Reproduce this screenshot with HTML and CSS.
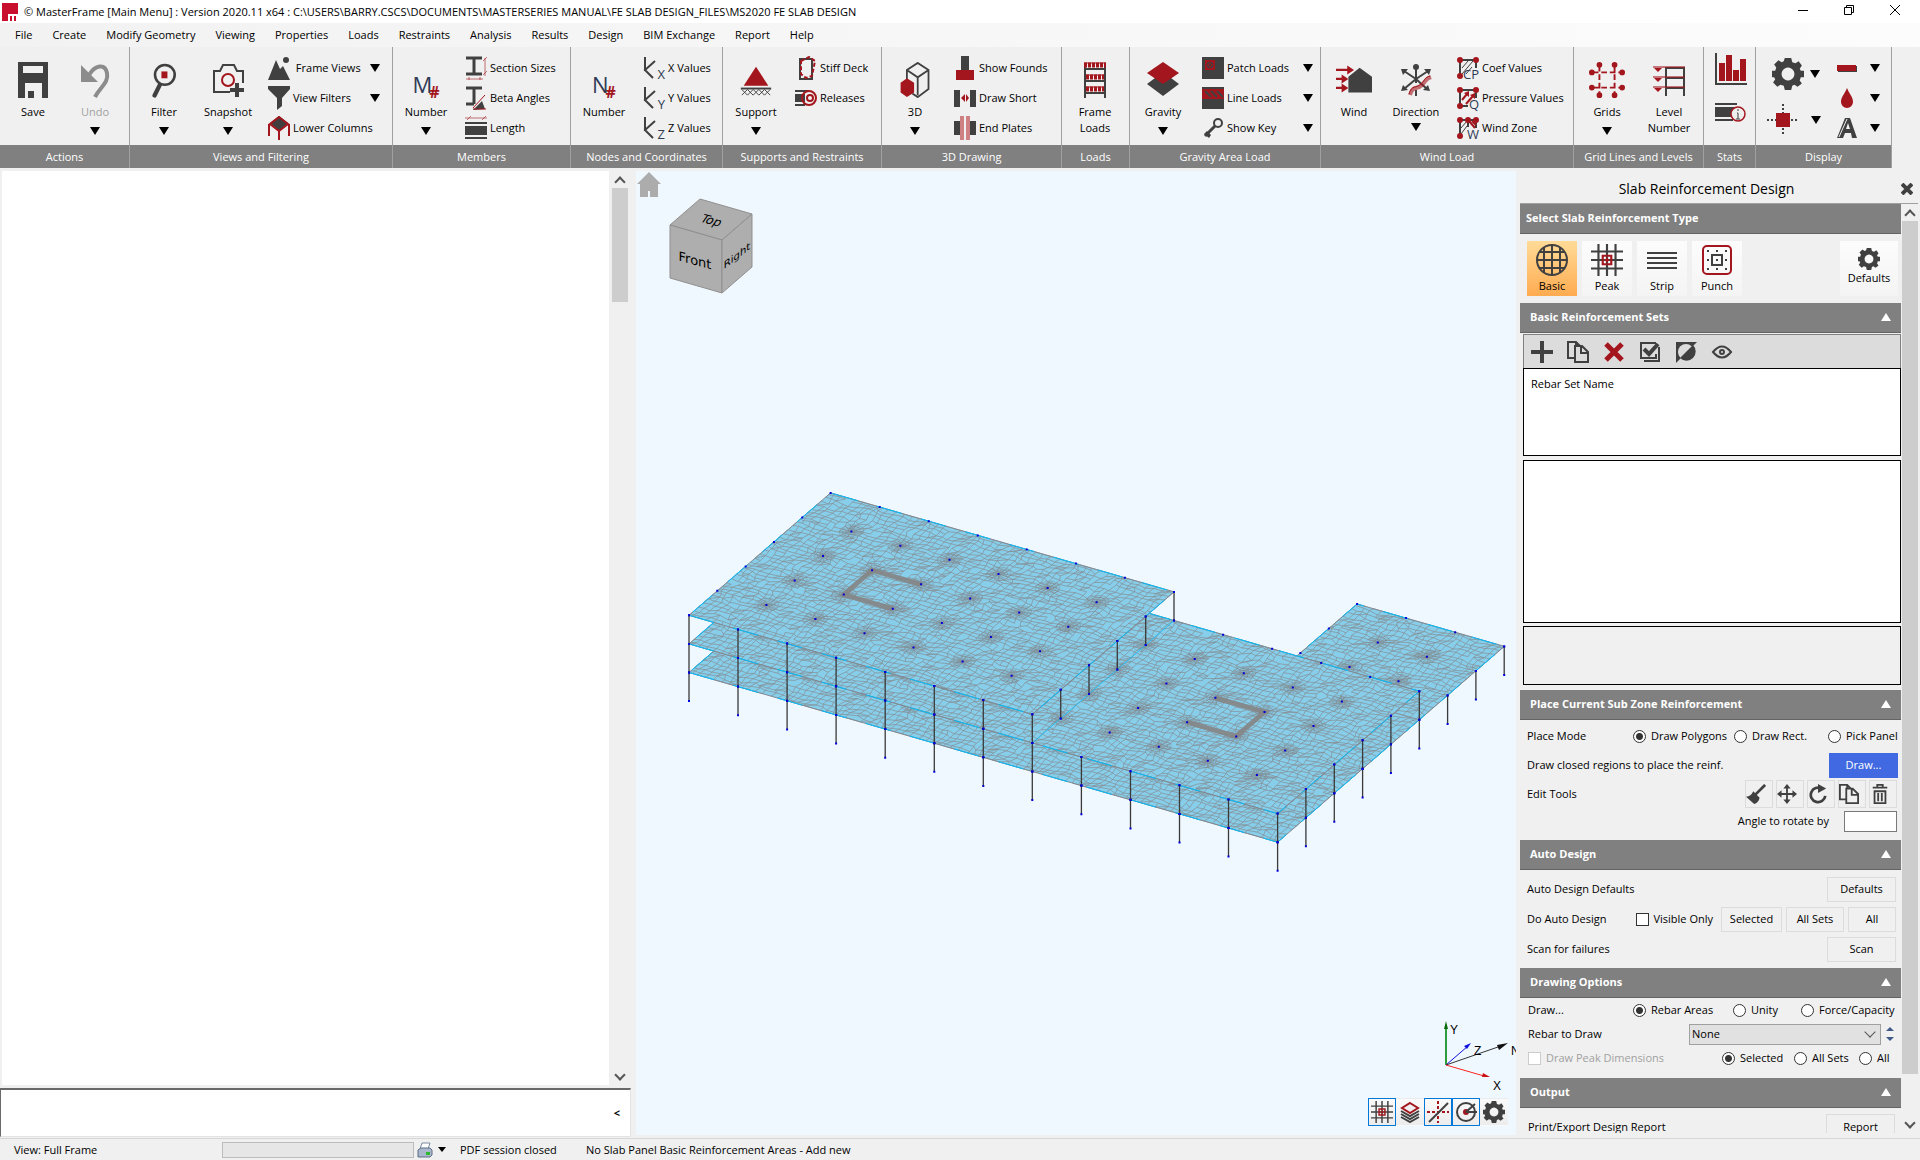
FILE: index.html
```html
<!DOCTYPE html>
<html lang="en">
<head>
<meta charset="utf-8">
<title>MasterFrame - Slab Reinforcement Design</title>
<link rel="stylesheet" href="styles.css">
</head>
<body>
<svg class="defs" aria-hidden="true">
  <symbol id="gear" viewBox="0 0 30 30"><path class="k" fill-rule="evenodd" d="M12 0h6l1 4 3 1 3-2 3 4-2 3 1 2h3v6h-3l-1 3 2 3-4 3-3-2-2 1-1 4h-6l-1-4-3-1-3 2-4-4 2-3-1-2H0v-6h3l1-3-2-3 4-4 3 2 2-1zM15 9a6 6 0 1 0 .01 0z"/></symbol>
  <symbol id="mesh" viewBox="0 0 30 30"><path class="ks" stroke-width="2" d="M7 0v30M15 0v30M23 0v30M0 7h30M0 15h30M0 23h30"/><path class="rs" stroke-width="2" d="M11 11h8v8h-8zM15 13v4M13 15h4"/></symbol>
  <symbol id="copy" viewBox="0 0 22 22"><path class="ks" stroke-width="2" d="M7 17H1V1h8l4 4M9 1v5M8 5h7l6 6v10H8zM14 5v7h7"/></symbol>
  <symbol id="axes" viewBox="0 0 22 22"><path class="ks" stroke-width="2" d="M2 0v14M12 4L2 13l8 8"/></symbol>
  <symbol id="pane" viewBox="0 0 22 22"><path class="ks" stroke-width="2" d="M3 3h16v8M3 3v16"/><path class="ks" d="M5 11l6-7M5 17l11-13M9 17l6-7"/><path class="r" d="M0 3a3 3 0 1 1 6 0 3 3 0 0 1-6 0M16 3a3 3 0 1 1 6 0 3 3 0 0 1-6 0M0 19a3 3 0 1 1 6 0 3 3 0 0 1-6 0"/></symbol>
  <symbol id="pane-flow" viewBox="0 0 22 22"><path class="ks" stroke-width="2" d="M3 3h16v8M3 3v16h8"/><path class="rs" stroke-width="2" d="M5 13l5-6M9 17l7-8"/><path class="r" d="M12 4v6L7 6zM18 6v6l-5-4zM0 3a3 3 0 1 1 6 0 3 3 0 0 1-6 0M16 3a3 3 0 1 1 6 0 3 3 0 0 1-6 0M0 19a3 3 0 1 1 6 0 3 3 0 0 1-6 0"/></symbol>
  <symbol id="pane-zone" viewBox="0 0 22 22"><path class="ks" stroke-width="2" d="M3 3h16v8M3 3v16M11 3v7"/><path class="ks" d="M4 11l6-7M4 17l6-8"/><path class="rs" stroke-width="2" d="M12 4l6 7M15 4l4 4"/><path class="r" d="M0 3a3 3 0 1 1 6 0 3 3 0 0 1-6 0M8 3a3 3 0 1 1 6 0 3 3 0 0 1-6 0M16 3a3 3 0 1 1 6 0 3 3 0 0 1-6 0M0 19a3 3 0 1 1 6 0 3 3 0 0 1-6 0"/></symbol>
</svg>

<header class="titlebar">
  <svg class="logo" viewBox="0 0 16 18"><path fill="#c8102e" d="M0 0h16v18H0z"/><path fill="none" stroke="#fff" stroke-width="2" d="M7 18v-6h8v6M11 12v6"/></svg>
  <h1>© MasterFrame [Main Menu] : Version 2020.11 x64 : C:\USERS\BARRY.CSCS\DOCUMENTS\MASTERSERIES MANUAL\FE SLAB DESIGN_FILES\MS2020 FE SLAB DESIGN</h1>
  <div class="window-buttons">
    <button aria-label="Minimise"><svg viewBox="0 0 12 12"><path d="M1 6.500h10"/></svg></button>
    <button aria-label="Restore"><svg viewBox="0 0 12 12"><path d="M1.500 3.500h7v7h-7zM3.500 3V1.500h7v7H9"/></svg></button>
    <button aria-label="Close"><svg viewBox="0 0 12 12"><path d="M1 1l10 10M11 1L1 11"/></svg></button>
  </div>
</header>

<nav class="menu">
  <a href="#">File</a><a href="#">Create</a><a href="#">Modify Geometry</a><a href="#">Viewing</a><a href="#">Properties</a><a href="#">Loads</a><a href="#">Restraints</a><a href="#">Analysis</a><a href="#">Results</a><a href="#">Design</a><a href="#">BIM Exchange</a><a href="#">Report</a><a href="#">Help</a>
</nav>

<div class="ribbon">
  <section class="group g-actions"><div class="tools">
    <button class="big"><svg viewBox="0 0 30 36"><path class="k" d="M0 0h30v36h-6V21H7v15H0zM5 4v7h20V4z" fill-rule="evenodd"/><path class="k" d="M10 29h6v7h-6z"/></svg><span>Save</span></button>
    <button class="big" disabled><svg viewBox="0 0 30 36"><path fill="#8c8c8c" d="M1 3v17h17l-6-6z"/><path fill="none" stroke="#8c8c8c" stroke-width="4" d="M9 13C15 3 25 1 27 11s-7 14-12 24"/></svg><span>Undo</span><i class="arrow"></i></button>
  </div><h2>Actions</h2></section>

  <section class="group g-views"><div class="tools">
    <button class="big"><svg viewBox="0 0 30 42"><circle cx="16" cy="15" r="11.500" fill="none" stroke="#404040" stroke-width="3"/><path class="r" d="M12 11h7v8h-7z"/><path class="ks" stroke-width="5" stroke-linecap="round" d="M10 27L4 39"/></svg><span>Filter</span><i class="arrow"></i></button>
    <button class="big"><svg viewBox="-2 0 36 34"><path class="ks" stroke-width="2" d="M18 29H2V8h6l3-6h11l3 6h6v12"/><circle class="rs" cx="16" cy="17" r="6" stroke-width="2"/><path class="k" d="M23 20h4v5h5v4h-5v5h-4v-5h-5v-4h5z"/></svg><span>Snapshot</span><i class="arrow"></i></button>
    <div class="list">
      <button><svg viewBox="0 0 22 24"><path class="k" d="M0 24L8 4l4 9 3-3 7 14z"/><circle class="k" cx="18" cy="4" r="3"/></svg>&nbsp;Frame Views<i class="arrow"></i></button>
      <button><svg viewBox="0 0 22 24"><path class="k" d="M0 0h22v3l-8 9v8l-5 4V12L0 3z"/></svg>View Filters<i class="arrow"></i></button>
      <button><svg viewBox="0 0 22 24"><path class="k" d="M11 0l9 7-9 8-9-8z"/><path class="rs" stroke-width="2" d="M11 1l9 7-9 7-9-7zM1 8v12M21 8v12M11 14v11"/></svg>Lower Columns</button>
    </div>
  </div><h2>Views and Filtering</h2></section>

  <section class="group g-members"><div class="tools">
    <button class="big"><span class="glyph"><b>M</b><em>#</em></span><span>Number</span><i class="arrow"></i></button>
    <div class="list">
      <button><svg viewBox="0 0 22 24"><path class="ks" stroke-width="3" d="M1 2h16M1 18h16M9 2v16"/><path class="rs" stroke-opacity=".6" d="M1 23h17M4 21v3M15 21v3M20 2v18M18 5l4-4M18 19l4-4"/></svg>Section Sizes</button>
      <button><svg viewBox="0 0 22 24"><path class="ks" stroke-width="3" d="M1 2h16M1 18h8M9 2v16"/><path class="k" d="M8 24l9-9 3 8z"/><path class="rs" d="M8 22L20 9M8 23h13"/></svg>Beta Angles</button>
      <button><svg viewBox="0 0 22 24"><path class="k" d="M0 6h22v2H0zM0 10h22v9H0zM0 21h22v2H0z"/><path class="rs" stroke-opacity=".6" d="M0 2h22M2 4l4-4M17 4l4-4"/></svg>Length</button>
    </div>
  </div><h2>Members</h2></section>

  <section class="group g-nodes"><div class="tools">
    <button class="big"><span class="glyph"><b>N</b><em>#</em></span><span>Number</span></button>
    <div class="list">
      <button><span class="axis"><svg><use href="#axes"/></svg><b>X</b></span>X Values</button>
      <button><span class="axis"><svg><use href="#axes"/></svg><b>Y</b></span>Y Values</button>
      <button><span class="axis"><svg><use href="#axes"/></svg><b>Z</b></span>Z Values</button>
    </div>
  </div><h2>Nodes and Coordinates</h2></section>

  <section class="group g-supports"><div class="tools">
    <button class="big"><svg viewBox="0 -3 32 38"><path class="r" d="M16 2l13 20H3z"/><path class="ks" stroke-width="2" d="M0 25h32"/><path class="ks" d="M1 32l6-6 6 6 6-6 6 6 6-6M1 26l6 6 6-6 6 6 6-6 6 6"/></svg><span>Support</span><i class="arrow"></i></button>
    <div class="list top">
      <button><svg viewBox="0 0 22 24"><path class="ks" stroke-width="2" d="M5 3h12v20H5z"/><path class="rs" stroke-width="2" stroke-dasharray="4 2" d="M6 5l8-4 6 4-3 15-6 2-5-4z"/></svg>Stiff Deck</button>
      <button><svg viewBox="0 0 22 24"><path class="ks" stroke-width="2" d="M0 5h14M0 19h10"/><path class="k" d="M0 8h10v8H0z"/><circle class="rs" cx="14" cy="12" r="7" stroke-width="2"/><circle class="rs" cx="15" cy="12" r="3" stroke-width="2"/></svg>Releases</button>
    </div>
  </div><h2>Supports and Restraints</h2></section>

  <section class="group g-3d"><div class="tools">
    <button class="big"><svg viewBox="0 0 32 40"><path class="ks" stroke-width="2" d="M7 22V9l12-8 12 8v21l-12 9-6-4M7 9l12 8 12-8M19 17v20"/><path class="r" d="M7 18l8 5v11l-8 5-7-5V23z"/></svg><span>3D</span><i class="arrow"></i></button>
    <div class="list">
      <button><svg viewBox="0 0 22 24"><path class="k" d="M7 0h8v15H7z"/><path class="r" d="M2 14h18v10H2z"/></svg>Show Founds</button>
      <button><svg viewBox="0 0 22 24"><path class="k" d="M0 4h6v17H0zM16 4h6v17h-6z"/><path class="r" d="M7 12l4-4v8zM15 12l-3-4v8z"/></svg>Draw Short</button>
      <button><svg viewBox="0 0 22 24"><path class="k" d="M0 5h7v14H0zM15 5h7v14h-7z"/><path fill="#cf8083" d="M6 0h4v24H6zM12 0h4v24h-4z"/></svg>End Plates</button>
    </div>
  </div><h2>3D Drawing</h2></section>

  <section class="group g-loads"><div class="tools">
    <button class="big"><svg viewBox="0 0 22 36"><path class="ks" stroke-width="2" d="M1 2v34M21 2v34M1 7h20M1 19h20M1 31h20"/><path class="rs" stroke-width="5" stroke-dasharray="3 1" d="M0 3h22M2 15h18M2 27h18"/><path class="rs" d="M0 1h22M2 13h18M2 25h18"/></svg><span>Frame Loads</span></button>
  </div><h2>Loads</h2></section>

  <section class="group g-gravity"><div class="tools">
    <button class="big"><svg viewBox="0 0 32 36"><path class="k" d="M16 10l16 12-16 12L0 22z"/><path class="r" d="M16 0l16 11-16 11L0 11z"/></svg><span>Gravity</span><i class="arrow"></i></button>
    <div class="list">
      <button><svg viewBox="0 0 22 22"><path class="k" d="M0 0h22v22H0z"/><path class="r" d="M3 3h10v10H3z"/><circle cx="8" cy="8" r="3" fill="none" stroke="#404040"/><path stroke="#404040" d="M6 6l4 4M10 6l-4 4"/></svg>Patch Loads<i class="arrow"></i></button>
      <button><svg viewBox="0 0 22 22"><path class="k" d="M0 0h22v22H0z"/><path class="r" d="M0 2h22v10H0z"/><path stroke="#404040" stroke-width="2" d="M3 4l6 6M9 4l6 6M15 4l6 6"/></svg>Line Loads<i class="arrow"></i></button>
      <button><svg viewBox="0 0 22 22"><circle cx="16" cy="6" r="4" class="ks" stroke-width="2"/><path class="ks" stroke-width="3" d="M13 9L3 19"/><path class="k" d="M2 17l3-3 4 4-2 3z"/></svg>Show Key<i class="arrow"></i></button>
    </div>
  </div><h2>Gravity Area Load</h2></section>

  <section class="group g-wind"><div class="tools">
    <button class="big"><svg viewBox="0 0 32 28"><path class="k" d="M11 25V11L21 3l11 8v14z"/><path class="rs" stroke-width="2" d="M0 5h12M0 13h6M0 21h6"/><path class="r" d="M10 1l6 4-6 4zM5 9l6 4-6 4zM5 17l6 4-6 4z"/></svg><span>Wind</span></button>
    <button class="big tight"><svg viewBox="-2 -2 34 36"><path class="ks" stroke-width="2" d="M15 3v16M15 26v6M15 15L3 7M15 15l12-8M15 15L3 25M15 15l11 10"/><circle class="k" cx="15" cy="3" r="3"/><path class="k" d="M0 5h7l-5 6zM30 5h-7l5 6zM0 27l2-6 5 5zM29 27l-2-6-5 5z"/><path class="rs" stroke-width="4" stroke-opacity=".6" d="M9 31c3-10 7-5 12-10s3-6 9-8"/><path class="rs" d="M8 30c3-10 7-5 12-10s3-6 9-8"/></svg><span>Direction</span><i class="arrow"></i></button>
    <div class="list">
      <button><span class="axis"><svg><use href="#pane"/></svg><b>CP</b></span>Coef Values</button>
      <button><span class="axis"><svg><use href="#pane-flow"/></svg><b>Q</b></span>Pressure Values</button>
      <button><span class="axis"><svg><use href="#pane-zone"/></svg><b>W</b></span>Wind Zone</button>
    </div>
  </div><h2>Wind Load</h2></section>

  <section class="group g-grids"><div class="tools">
    <button class="big"><svg viewBox="0 0 38 38"><path class="rs" stroke-width="2" stroke-dasharray="6 3" d="M11 4v30M27 4v30M4 11h30M4 27h30"/><path class="r" d="M8 3a3 3 0 1 1 6 0 3 3 0 0 1-6 0M24 3a3 3 0 1 1 6 0 3 3 0 0 1-6 0M8 35a3 3 0 1 1 6 0 3 3 0 0 1-6 0M24 35a3 3 0 1 1 6 0 3 3 0 0 1-6 0M0 11a3 3 0 1 1 6 0 3 3 0 0 1-6 0M32 11a3 3 0 1 1 6 0 3 3 0 0 1-6 0M0 27a3 3 0 1 1 6 0 3 3 0 0 1-6 0M32 27a3 3 0 1 1 6 0 3 3 0 0 1-6 0"/></svg><span>Grids</span><i class="arrow"></i></button>
    <button class="big"><svg viewBox="-1 -2 34 36"><path class="ks" stroke-width="2" d="M13 32V4h18v28M13 14h18M13 24h18"/><path class="rs" stroke-width="2" stroke-opacity=".55" d="M0 3h32M0 13h32M0 23h32"/><path class="r" d="M1 4h8l-4 4zM1 14h8l-4 4zM1 24h8l-4 4z"/></svg><span>Level Number</span></button>
  </div><h2>Grid Lines and Levels</h2></section>

  <section class="group g-stats"><div class="tools">
    <button aria-label="Charts"><svg viewBox="0 0 32 32"><path class="ks" stroke-width="2" d="M1 0v31h31"/><path class="r" d="M4 10h6v18H4zM11 2h6v26h-6zM18 17h6v11h-6zM25 6h6v22h-6z"/></svg></button>
    <button aria-label="Member statistics"><svg viewBox="0 0 32 32"><path class="ks" stroke-width="2" d="M0 7h22M0 23h18"/><path class="k" d="M0 10h20v10H0z"/><circle cx="23" cy="17" r="7" fill="#eee" stroke="#a3161d" stroke-width="1.500"/><path class="ks" d="M23 12v2M22 16h1v6M21 22h4"/></svg></button>
  </div><h2>Stats</h2></section>

  <section class="group g-display"><div class="tools">
    <div class="wide">
      <button class="settings" aria-label="Settings"><svg><use href="#gear"/></svg><i class="arrow"></i></button>
      <button aria-label="Node display"><svg viewBox="0 0 32 32"><path class="ks" stroke-dasharray="2 2" stroke-width="2" d="M16 0v32M0 16h32"/><path class="r" d="M9 9h14v14H9z"/></svg><i class="arrow"></i></button>
    </div>
    <div class="list">
      <button aria-label="Line weight"><svg viewBox="0 0 22 24"><path class="k" d="M2 10h19v6H2z"/><path class="r" d="M1 9h19v6H1z"/></svg><i class="arrow"></i></button>
      <button aria-label="Colour"><svg viewBox="0 0 22 24"><path class="r" d="M11 2c3 7 6 9 6 14a6 6 0 0 1-12 0c0-5 3-7 6-14z"/></svg><i class="arrow"></i></button>
      <button aria-label="Text style"><svg viewBox="0 0 22 24"><path class="k" fill-rule="evenodd" d="M1 22L9 2h5l7 20h-5l-1-5H9l-2 5zM10 13h4l-2-6z"/><path stroke="#eee" d="M3 21l8-18"/></svg><i class="arrow"></i></button>
    </div>
  </div><h2>Display</h2></section>
</div>

<main class="work">
  <div class="left">
    <div class="document">
      <div class="page"></div>
      <div class="scrollbar"><i class="up"></i><div class="thumb short"></div><i class="down"></i></div>
    </div>
    <div class="console"><button aria-label="Collapse">&lt;</button></div>
  </div>

  <div class="view">
    <svg class="scene" viewBox="636 171 880 964">
      <path fill="#acacac" d="M649 172l12 12h-3v13h-8v-6h-2v6h-8v-13h-3z"/>
      <g fill="#aeaeae" stroke="#8f8f8f" stroke-width="1"><path d="M700 199l52 15-30 26-52-15z"/><path d="M670 225l52 15v53l-52-15z"/><path d="M752 214v53l-30 26v-53z"/></g>
      <g class="cube-text" text-anchor="middle"><text class="front" transform="translate(695 265) skewY(15)">Front</text><text class="right" transform="translate(737 259) skewY(-38)">Right</text><text transform="translate(709 224) rotate(15) skewX(-20)">Top</text></g>
      <g id="model"></g>
      <g class="triad">
        <path stroke="#2c9c3c" stroke-width="2" d="M1446 1065v-36"/><path fill="#0a6a0a" d="M1446 1021l-2 8h4z"/>
        <path stroke="#11d" stroke-width="1" d="M1446 1065l22-19"/><path fill="#11d" d="M1471 1043l-7 3 3 3z"/>
        <path stroke="#333" stroke-width="1" d="M1446 1065l52-18"/><path fill="#111" d="M1508 1043l-11 2 2 5z"/>
        <path stroke="#f22" stroke-width="1" d="M1446 1065l38 11"/><path fill="#c11" d="M1490 1077l-7-4-1 4z"/>
        <text x="1450" y="1034">Y</text><text x="1474" y="1055">Z</text><text x="1511" y="1055">N</text><text x="1493" y="1090">X</text>
      </g>
    </svg>
    <div class="view-tools">
      <button class="on" aria-label="Grid snap"><svg><use href="#mesh"/></svg></button>
      <button aria-label="Layers"><svg viewBox="0 0 22 22"><path class="ks" stroke-width="2" d="M2 10l9 5 9-5M2 13l9 5 9-5M2 16l9 5 9-5"/><path class="rs layer" stroke-width="2" d="M11 2l8 5-8 5-8-5z"/></svg></button>
      <button class="on" aria-label="Intersection snap"><svg viewBox="0 0 22 22"><path class="rs" stroke-width="2" stroke-dasharray="3 2" d="M11 0v22M0 11h22"/><path class="ks" stroke-width="2" d="M2 21L21 2"/></svg></button>
      <button class="on" aria-label="Polar snap"><svg viewBox="0 0 22 22"><circle class="ks" cx="11" cy="11" r="9" stroke-width="2"/><circle class="r" cx="11" cy="11" r="3"/><path class="ks" stroke-width="2" d="M11 11h11M11 11l9-8"/></svg></button>
      <button aria-label="View settings"><svg><use href="#gear"/></svg></button>
    </div>
  </div>

  <aside class="panel">
    <div class="panel-title"><h2>Slab Reinforcement Design</h2><button aria-label="Close panel"><svg viewBox="0 0 12 12"><path class="ks" stroke-width="4" d="M1 1l10 10M11 1L1 11"/></svg></button></div>
    <div class="panel-scroll">
      <div class="panel-body">
        <h3 class="first">Select Slab Reinforcement Type</h3>
        <div class="types">
          <button class="active"><svg viewBox="0 0 32 32"><circle class="ks" cx="16" cy="16" r="15" stroke-width="2"/><path class="ks" stroke-width="2" d="M8 4v24M16 1v30M24 4v24M4 8h24M1 16h30M4 24h24"/></svg>Basic</button>
          <button><svg><use href="#mesh"/></svg>Peak</button>
          <button><svg viewBox="0 0 32 32"><path class="ks" stroke-width="2" d="M1 9h30M1 14h30M1 19h30M1 24h30"/></svg>Strip</button>
          <button><svg viewBox="0 0 32 32"><rect class="rs" x="2" y="2" width="28" height="28" rx="4" stroke-width="2"/><path class="ks" stroke-width="2" d="M11 11h10v10H11z"/><path class="ks" stroke-width="2" stroke-dasharray="2 7" d="M6 7h21M6 25h21M6 16h21"/></svg>Punch</button>
          <button class="defaults"><svg><use href="#gear"/></svg>Defaults</button>
        </div>
        <h3>Basic Reinforcement Sets<i class="fold"></i></h3>
        <div class="sets">
          <div class="set-tools">
            <button aria-label="Add"><svg viewBox="0 0 22 22"><path class="ks" stroke-width="4" d="M11 0v22M0 11h22"/></svg></button>
            <button aria-label="Copy"><svg><use href="#copy"/></svg></button>
            <button aria-label="Delete"><svg viewBox="0 0 22 22"><path class="rs" stroke-width="5" d="M3 3l16 16M19 3L3 19"/></svg></button>
            <button aria-label="Select all"><svg viewBox="0 0 22 22"><path class="ks" stroke-width="2" d="M17 2H2v15h15v-4M20 6v14H5"/><path class="ks" stroke-width="4" d="M5 8l5 5L19 3"/></svg></button>
            <button aria-label="Invert"><svg viewBox="0 0 22 22"><path class="k" d="M1 1h21L1 22z"/><circle cx="11" cy="11" r="8" fill="#dcdcdc"/><path class="k" d="M18 4a9 9 0 1 1-13 13z"/></svg></button>
            <button aria-label="Show"><svg viewBox="0 0 22 22"><path class="ks" stroke-width="2" d="M2 11q9-11 18 0-9 11-18 0z"/><circle class="ks" cx="11" cy="11" r="2" stroke-width="2"/></svg></button>
          </div>
          <div class="set-list">Rebar Set Name</div>
          <div class="set-detail"></div>
          <div class="set-note"></div>
        </div>

        <h3>Place Current Sub Zone Reinforcement<i class="fold"></i></h3>
        <div class="place">
          <div class="row mode"><span>Place Mode</span>
            <label><input type="radio" name="mode" checked>Draw Polygons</label><label><input type="radio" name="mode">Draw Rect.</label><label><input type="radio" name="mode">Pick Panel</label></div>
          <div class="row draw"><span>Draw closed regions to place the reinf.</span><button class="primary">Draw...</button></div>
          <div class="row edit"><span>Edit Tools</span>
            <button aria-label="Clear"><svg viewBox="0 0 22 22"><path class="ks" stroke-width="3" d="M21 1L10 12"/><path class="k" d="M8 8l7 7c-1 4-3 6-6 7L0 14c4 0 6-2 8-6z"/></svg></button>
            <button aria-label="Move"><svg viewBox="0 0 22 22"><path class="ks" stroke-width="2" d="M11 3v16M3 11h16"/><path class="k" d="M11 0l4 5H7zM11 22l4-5H7zM0 11l5-4v8zM22 11l-5-4v8z"/></svg></button>
            <button aria-label="Rotate"><svg viewBox="0 0 22 22"><path class="ks" stroke-width="3" d="M15 5a8 8 0 1 0 4 8"/><path class="k" d="M11 0l9 5-9 5z"/></svg></button>
            <button aria-label="Copy region"><svg><use href="#copy"/></svg></button>
            <button aria-label="Delete region"><svg viewBox="0 0 22 22"><path class="ks" stroke-width="2" d="M3 4h16M8 3V1h6v2M5 8v13h12V8M4 8h14M9 10v9M13 10v9"/></svg></button></div>
          <div class="row angle"><label for="angle">Angle to rotate by</label><input id="angle" type="text"></div>
        </div>

        <h3>Auto Design<i class="fold"></i></h3>
        <div class="auto">
          <div class="row"><span>Auto Design Defaults</span><button class="btn w70">Defaults</button></div>
          <div class="row"><span>Do Auto Design</span><label class="visible"><input type="checkbox">Visible Only</label><button class="btn w62">Selected</button><button class="btn w58">All Sets</button><button class="btn w48">All</button></div>
          <div class="row"><span>Scan for failures</span><button class="btn w70">Scan</button></div>
        </div>

        <h3>Drawing Options<i class="fold"></i></h3>
        <div class="drawing">
          <div class="row kind"><span>Draw...</span>
            <label><input type="radio" name="kind" checked>Rebar Areas</label><label><input type="radio" name="kind">Unity</label><label><input type="radio" name="kind">Force/Capacity</label></div>
          <div class="row rebar"><label for="rebar">Rebar to Draw</label><select id="rebar"><option>None</option></select><span class="spin"><i></i><i></i></span></div>
          <div class="row scope"><label class="off"><input type="checkbox" disabled>Draw Peak Dimensions</label>
            <label><input type="radio" name="scope" checked>Selected</label><label><input type="radio" name="scope">All Sets</label><label><input type="radio" name="scope">All</label></div>
        </div>

        <h3>Output<i class="fold"></i></h3>
        <div class="output"><div class="row"><span>Print/Export Design Report</span><button class="btn w70">Report</button></div></div>
      </div>
      <div class="scrollbar"><i class="up"></i><div class="thumb long"></div><i class="down"></i></div>
    </div>
  </aside>
</main>

<footer class="status">
  <span class="view-name">View: Full Frame</span>
  <div class="progress"></div>
  <button aria-label="Print"><svg viewBox="0 0 16 16"><path fill="#fff" stroke="#7a8aa0" d="M5 1h8l-2 6H3z"/><path fill="#a9b8cc" stroke="#5d6c84" d="M1 8l3-2h9l2 2v5l-2 2H1z"/><path fill="#2eb82e" d="M9 10h4v3H9z"/></svg><i class="arrow"></i></button>
  <span class="session">PDF session closed</span>
  <span>No Slab Panel Basic Reinforcement Areas - Add new</span>
</footer>
<script src="model.js"></script>
</body>
</html>
```
FILE: styles.css
```css
* { box-sizing: border-box; }
body { margin: 0; height: 100vh; display: flex; flex-direction: column; overflow: hidden; background: #f0f0f0; color: #000; font: 11px/16px "Open Sans", "Noto Sans", sans-serif; }
button, input, select { font: inherit; color: inherit; padding: 0; margin: 0; border: 0; background: none; }
h1, h2, h3 { margin: 0; font: inherit; }
.defs { display: none; }
.k { fill: #404040; }
.r { fill: #a3161d; }
.ks { fill: none; stroke: #404040; }
.rs { fill: none; stroke: #a3161d; }
.layer { fill: #f0f0f0; }
.arrow { width: 0; height: 0; border: 5px solid transparent; border-top: 8px solid #000; border-bottom: 0; }

.titlebar { flex: none; height: 23px; display: flex; align-items: center; padding-left: 2px; background: #fff; }
.logo { width: 16px; height: 18px; margin-right: 6px; }
.titlebar h1 { flex: 1; white-space: nowrap; }
.window-buttons { display: flex; padding-right: 2px; }
.window-buttons button { width: 46px; height: 23px; }
.window-buttons svg { width: 12px; height: 12px; fill: none; stroke: #000; }
.menu { flex: none; height: 24px; display: flex; align-items: center; gap: 20px; padding-left: 15px; background: linear-gradient(90deg, #f2f2f2, #fcfcfc); }
.menu a { color: inherit; text-decoration: none; white-space: nowrap; }

.ribbon { flex: none; display: flex; height: 121px; margin-bottom: 3px; }
.group { flex: none; display: flex; flex-direction: column; border-right: 1px solid #a0a0a0; }
.group h2 { height: 23px; line-height: 23px; text-align: center; color: #fff; background: #808080; white-space: nowrap; }
.tools { flex: 1; display: flex; padding: 6px 0 0 2px; }
.g-actions { width: 130px; }
.g-views { width: 263px; }
.g-members { width: 178px; }
.g-nodes { width: 152px; }
.g-supports { width: 159px; }
.g-3d { width: 180px; }
.g-loads { width: 68px; }
.g-gravity { width: 191px; }
.g-wind { width: 253px; }
.g-grids { width: 130px; }
.g-stats { width: 52px; }
.g-display { width: 136px; }
.big { width: 62px; height: 90px; padding-top: 8px; display: flex; flex-direction: column; align-items: center; }
.g-views .big { width: 64px; }
.big svg, .glyph { flex: none; width: 38px; height: 38px; padding: 1px; margin-bottom: 5px; }
.big .arrow { margin-top: 7px; }
.big.tight .arrow { margin-top: 3px; }
.big:disabled { color: #a0a0a0; }
.glyph { display: flex; align-items: flex-end; justify-content: center; font-size: 22px; line-height: 28px; color: #2f3b56; }
.glyph b { font-weight: 400; }
.glyph em { font: bold 16px/16px "Open Sans", sans-serif; color: #a3161d; margin: 0 0 -2px -3px; }
.list { flex: 1; display: flex; flex-direction: column; }
.list button { height: 30px; display: flex; align-items: center; gap: 3px; white-space: nowrap; }
.list button > svg, .axis svg { flex: none; width: 22px; height: 24px; }
.list .arrow { margin-left: auto; }
.axis { position: relative; width: 22px; height: 24px; }
.axis b { position: absolute; right: 0; bottom: -2px; font-weight: 400; font-size: 13px; color: #2f3b56; }
.g-views .list { padding: 0 12px 0 8px; }
.g-members .list, .g-nodes .list, .g-supports .list, .g-3d .list { padding-left: 8px; }
.g-gravity .list { padding: 0 7px 0 8px; }
.g-wind .list { padding-left: 10px; }
.g-stats .tools { flex-direction: column; padding: 4px 0 0 11px; gap: 4px; }
.g-stats button { width: 32px; height: 40px; }
.g-stats svg { width: 32px; height: 32px; }
.wide { width: 64px; display: flex; flex-direction: column; padding: 5px 0 0 9px; gap: 14px; }
.wide button { display: flex; align-items: center; gap: 12px; }
.wide svg { flex: none; width: 32px; height: 32px; }
.wide .settings { gap: 6px; padding-left: 5px; }
.g-display .list { padding: 0 11px 0 14px; }

.work { flex: 1; min-height: 0; display: flex; }
.left { flex: none; width: 33.125%; display: flex; flex-direction: column; padding: 0 5px 1px 0; }
.document { flex: 1; display: flex; gap: 3px; padding: 0 3px 3px 2px; }
.page { flex: 1; background: #fff; }
.scrollbar { flex: none; width: 16px; display: flex; flex-direction: column; background: #f0f0f0; }
.scrollbar i { flex: none; height: 17px; display: flex; align-items: center; justify-content: center; }
.scrollbar i::before { content: ""; width: 6px; height: 6px; border: solid #555; border-width: 2px 0 0 2px; transform: translateY(2px) rotate(45deg); }
.scrollbar .down { margin-top: auto; }
.scrollbar .down::before { transform: translateY(-2px) rotate(225deg); }
.thumb { background: #cdcdcd; }
.short { height: 12.5%; }
.long { flex: 0 1 853px; }
.console { flex: none; height: 49px; border: 1px solid #e3e3e3; border-top: 2px solid #696969; border-left-color: #696969; background: #fff; display: flex; align-items: center; justify-content: flex-end; padding-right: 10px; font-weight: 700; }

.view { flex: 1; min-width: 0; margin-bottom: 3px; position: relative; background: #f0f8ff; }
.scene { display: block; width: 100%; height: 100%; }
.cube-text { font: 12px "DejaVu Sans", sans-serif; }
.cube-text .front { font-size: 13px; }
.cube-text .right { font-size: 10px; }
.triad text { font: 12px "Liberation Sans", sans-serif; }
.view-tools { position: absolute; right: 8px; bottom: 9px; display: flex; }
.view-tools button { width: 28px; height: 28px; padding: 2px; border: 1px solid transparent; background: linear-gradient(#fafafa, #ececec); }
.view-tools .on { border-color: #0078d7; }
.view-tools svg { width: 22px; height: 22px; display: block; }

.panel { flex: none; width: 404px; display: flex; flex-direction: column; padding: 0 2px 5px 4px; }
.panel-title { flex: none; height: 33px; display: flex; align-items: center; border-bottom: 1px solid #a0a0a0; }
.panel-title h2 { flex: 1; text-align: center; font-size: 14px; padding: 3px 8px 0 0; }
.panel-title button { width: 12px; height: 12px; display: flex; margin: 3px 5px 0 0; }
.panel-title svg { width: 12px; height: 12px; }
.panel-scroll { flex: 1; min-height: 0; display: flex; gap: 1px; }
.panel-body { flex: 1; overflow: hidden; }
h3 { height: 30px; display: flex; align-items: center; justify-content: space-between; padding: 0 10px 2px; font-weight: 700; color: #fff; background: #808080; border-bottom: 1px solid #646464; }
h3.first { padding-left: 6px; }
.fold { border: 5px solid transparent; border-top: 0; border-bottom: 8px solid #fff; }
.types { height: 69px; display: flex; gap: 5px; padding: 7px 3px 7px 7px; }
.types button { width: 50px; display: flex; flex-direction: column; align-items: center; justify-content: center; gap: 2px; background: linear-gradient(#fcfcfc, #f4f4f4); }
.types svg { width: 32px; height: 32px; }
.types .active { background: linear-gradient(#ffdb97, #ffab50); }
.types .defaults { width: 58px; margin-left: auto; padding-bottom: 4px; gap: 0; }
.types .defaults svg { width: 22px; height: 22px; }
.sets { padding: 1px 0 5px 3px; }
.set-tools { height: 34px; display: flex; align-items: center; gap: 14px; padding-left: 7px; background: #dcdcdc; border: 1px solid #808080; border-bottom: 0; }
.set-tools button, .set-tools svg { width: 22px; height: 22px; display: block; }
.set-list, .set-detail, .set-note { border: 1px solid #000; background: #fff; }
.set-list { height: 88px; padding: 7px; margin-bottom: 4px; }
.set-detail { height: 163px; margin-bottom: 3px; }
.set-note { height: 59px; background: #f0f0f0; }

.row { display: flex; align-items: center; }
.row span { white-space: nowrap; }
.row label { display: flex; align-items: center; gap: 5px; white-space: nowrap; }
input[type=radio], input[type=checkbox] { appearance: none; flex: none; width: 13px; height: 13px; border: 1px solid #333; background: #fff; }
input[type=radio] { border-radius: 50%; }
input[type=radio]:checked { background: radial-gradient(circle, #333 3px, #fff 4px); }
input[type=checkbox]:disabled { border-color: #ccc; }
.row .off { color: #a0a0a0; }
.place { padding: 1px 3px 7px 7px; height: 120px; }
.mode { height: 30px; display: grid; grid-template-columns: 106px 101px 94px 1fr; }
.draw { height: 28px; justify-content: space-between; }
.primary { width: 69px; height: 25px; background: #4169e1; color: #fff; }
.edit { height: 30px; gap: 3px; padding-right: 1px; }
.edit span { flex: 1; }
.edit button { width: 28px; height: 28px; border: 1px solid #dcdcdc; display: flex; align-items: center; justify-content: flex-start; }
.edit svg { width: 20px; height: 20px; }
.angle { height: 24px; justify-content: flex-end; gap: 15px; padding-right: 1px; }
.angle input { width: 53px; height: 21px; border: 1px solid #7a7a7a; background: #fff; padding: 0 4px; }
.auto { height: 98px; padding: 4px 5px 0 7px; }
.auto .row { height: 30px; gap: 4px; }
.auto span { flex: 1; }
.btn { height: 25px; border: 1px solid #dcdcdc; }
.w70 { width: 69px; }
.w62 { width: 61px; }
.w58 { width: 58px; }
.w48 { width: 48px; }
.visible { margin-right: 4px; }
.drawing { height: 80px; padding: 0 3px 0 8px; }
.kind { height: 24px; display: grid; grid-template-columns: 105px 100px 68px 1fr; }
.rebar { height: 24px; position: relative; }
.rebar label { flex: 1; }
.rebar select { width: 192px; height: 21px; padding: 0 2px; appearance: none; border: 1px solid #a0a0a0; background: #e1e1e1; }
.rebar::after { content: ""; position: absolute; right: 24px; top: 6px; width: 7px; height: 7px; border: solid #555; border-width: 0 1px 1px 0; transform: rotate(45deg); }
.spin { width: 17px; display: flex; flex-direction: column; align-items: center; gap: 6px; }
.spin i { border: 4px solid transparent; border-top: 0; border-bottom: 4px solid #3f5a8a; }
.spin i + i { border-top: 4px solid #3f5a8a; border-bottom: 0; }
.scope { height: 24px; display: grid; grid-template-columns: 194px 72px 65px 1fr; }
.output { padding: 6px 6px 0 8px; }
.output span { flex: 1; }

.status { flex: none; height: 22px; display: flex; align-items: center; padding-left: 14px; border-top: 1px solid #d7d7d7; }
.view-name { width: 208px; }
.progress { width: 192px; height: 16px; border: 1px solid #bcbcbc; background: #e6e6e6; margin-right: 3px; }
.status button { width: 43px; display: flex; align-items: center; gap: 5px; }
.status svg { width: 16px; height: 16px; }
.status .arrow { border-width: 4px; border-top-width: 5px; border-bottom: 0; }
.session { width: 126px; }
```
FILE: model.js
```js
(function () {
  var NS = 'http://www.w3.org/2000/svg';
  var root = document.getElementById('model');

  // bay (i, j) on storey k, projected to the view
  function p(i, j, k) {
    return [(689 + 49.05 * i + 28.33 * j).toFixed(1), (615.3 + 14.14 * i - 24.47 * j + 28.6 * k).toFixed(1)];
  }
  function path(pts, close) { return 'M' + pts.map(function (q) { return q.join(' '); }).join('L') + (close ? 'Z' : ''); }
  function add(d, attrs) {
    var e = document.createElementNS(NS, 'path');
    e.setAttribute('d', d);
    for (var a in attrs) e.setAttribute(a, attrs[a]);
    root.appendChild(e);
  }
  var seed = 7;
  function rnd() { seed = (seed * 16807) % 2147483647; return seed / 2147483647; }

  // element corner, turned a little and drawn in towards the nearest column head
  function warp(u, v, edge) {
    var ci = Math.round(u), cj = Math.round(v), du = u - ci, dv = v - cj, d = Math.hypot(du, dv);
    if (!edge) {
      var turn = 0.9 * Math.max(0, 0.5 - d) * Math.sin(ci * 2.3 + cj * 1.7);
      var x = du * Math.cos(turn) - dv * Math.sin(turn), y = du * Math.sin(turn) + dv * Math.cos(turn);
      du = x + (rnd() - 0.5) * 0.06;
      dv = y + (rnd() - 0.5) * 0.08;
      d = Math.hypot(du, dv);
    }
    var f = d < 0.5 && d > 0 ? Math.pow(d / 0.5, 0.45) : 1;
    return [ci + du * f, cj + dv * f];
  }
  function slab(k, rects, outline, walls) {
    var rim = path(outline.map(function (c) { return p(c[0], c[1], k); }), true);
    add(rim, { fill: '#87ceeb' });
    var n = 8, d = '', heads = '', nodes = '';
    rects.forEach(function (r) {
      var w = (r[2] - r[0]) * n, h = (r[3] - r[1]) * n, g = [], x, y;
      for (y = 0; y <= h; y++) {
        g.push([]);
        for (x = 0; x <= w; x++) {
          var q = warp(r[0] + x / n, r[1] + y / n, x === 0 || y === 0 || x === w || y === h);
          g[y].push(p(q[0], q[1], k));
        }
      }
      for (y = 0; y <= h; y++) for (x = 0; x <= w; x++) {
        if (x < w && rnd() < 0.95) d += path([g[y][x], g[y][x + 1]]);
        if (y < h && rnd() < 0.95) d += path([g[y][x], g[y + 1][x]]);
        if (x < w && y < h && rnd() < 0.1) d += path([g[y][x], g[y + 1][x + 1]]);
      }
      for (y = r[1]; y <= r[3]; y++) for (x = r[0]; x <= r[2]; x++) {
        if (x > r[0] && x < r[2] && y > r[1] && y < r[3]) {
          [0.05, 0.1, 0.15, 0.21].forEach(function (rad) {
            var ring = [];
            for (var t = 0; t < 14; t++) ring.push(p(x + rad * Math.cos(t * 0.449), y + rad * 1.2 * Math.sin(t * 0.449), k));
            heads += path(ring, true);
          });
          for (var s = 0; s < 14; s++) heads += path([p(x, y, k), p(x + 0.2 * Math.cos(s * 0.449), y + 0.24 * Math.sin(s * 0.449), k)]);
        }
        var c = p(x, y, k);
        nodes += 'M' + (c[0] - 1) + ' ' + c[1] + 'h2';
      }
    });
    add(d, { fill: 'none', stroke: '#868c90', 'stroke-width': 0.8, 'stroke-opacity': 0.85 });
    add(heads, { fill: 'none', stroke: '#80858a', 'stroke-width': 0.6, 'stroke-opacity': 0.7 });
    if (walls) add(path(walls.map(function (c) { return p(c[0], c[1], k); })), { fill: 'none', stroke: '#858585', 'stroke-width': 5, 'stroke-opacity': 0.9 });
    add(rim, { fill: 'none', stroke: '#808890', 'stroke-width': 1 });
    add(rim, { fill: 'none', stroke: '#00bfff', 'stroke-width': 1, 'stroke-dasharray': '26 20' });
    add(nodes, { stroke: '#0000d8', 'stroke-width': 2 });
  }
  function columns(k, list) {
    var d = '', ends = '';
    list.forEach(function (c) {
      var a = p(c[0], c[1], k), b = p(c[0], c[1], k + 1);
      d += path([a, b]);
      ends += 'M' + (a[0] - 1) + ' ' + a[1] + 'h2M' + (b[0] - 1) + ' ' + b[1] + 'h2';
    });
    add(d, { stroke: '#3a3a3a', 'stroke-width': 1.3 });
    add(ends, { stroke: '#0000d8', 'stroke-width': 2 });
  }
  function run(nx, ny) {
    var out = [], i;
    for (i = 0; i <= nx; i++) out.push([i, 0]);
    for (i = 1; i <= ny; i++) out.push([nx, i]);
    return out;
  }

  slab(2, [[0, 0, 12, 5], [9, 5, 12, 8]], [[0, 0], [12, 0], [12, 8], [9, 8], [9, 5], [0, 5]]);
  columns(2, run(12, 8));
  slab(1, [[0, 0, 12, 5]], [[0, 0], [12, 0], [12, 5], [0, 5]], [[9, 3], [10, 3], [10, 2], [9, 2]]);
  add(path([p(7, 0, 1), p(7, 5, 1)]), { stroke: '#00bfff', 'stroke-width': 0.7 });
  columns(1, run(12, 5));
  slab(0, [[0, 0, 7, 5]], [[0, 0], [7, 0], [7, 5], [0, 5]], [[3, 3], [2, 3], [2, 2], [3, 2]]);
  columns(0, run(7, 5));
})();
```
